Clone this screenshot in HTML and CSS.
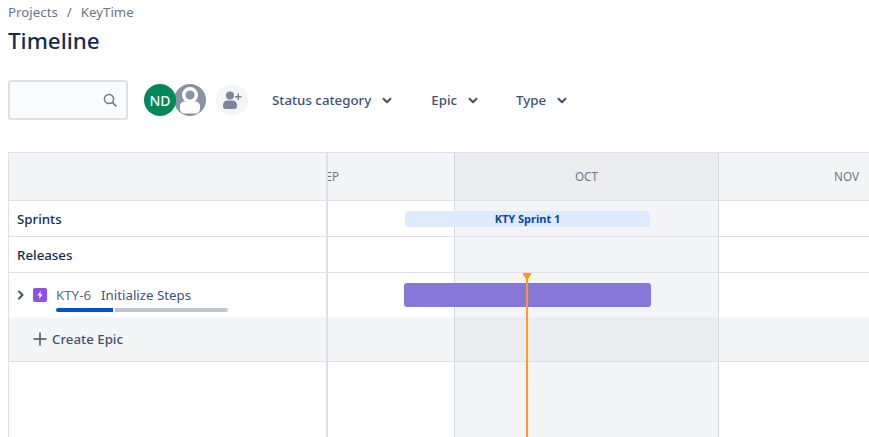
FILE: index.html
```html
<!DOCTYPE html>
<html lang="en">
<head>
<meta charset="utf-8">
<title>Timeline</title>
<link rel="stylesheet" href="styles.css">
</head>
<body>
<nav class="crumbs"><span>Projects</span><span class="sep">/</span><span>KeyTime</span></nav>
<h1 class="title">Timeline</h1>
<div class="toolbar">
  <div class="search">
    <svg class="search-icon" width="16" height="16" viewBox="0 0 16 16"><circle cx="7" cy="7" r="4.6" fill="none" stroke="#6b778c" stroke-width="1.5"/><path d="M10.4 10.4L14 14" stroke="#6b778c" stroke-width="1.6" stroke-linecap="round"/></svg>
  </div>
  <div class="avatars">
    <div class="avatar avatar-nd">ND</div>
    <div class="avatar avatar-user">
      <svg width="32" height="32" viewBox="0 0 32 32"><circle cx="16" cy="16" r="16" fill="#8993a4"/><circle cx="16" cy="11" r="6.3" fill="none" stroke="#fff" stroke-width="3.5"/><path d="M6 22c0-3 2-4.500 4.500-4.500h11c2.500 0 4.500 1.500 4.500 4.500v3c0 2.500-2 4.500-4.500 4.500h-11C8 29.500 6 27.500 6 25z" fill="#fff"/></svg>
    </div>
  </div>
  <div class="add-user">
    <svg width="24" height="24" viewBox="0 0 24 24" fill="#7a869a"><circle cx="10" cy="7.500" r="4"/><path d="M3 17c0-3 2-4.500 4.500-4.500h5c2.500 0 4.500 1.500 4.500 4.500v1.500c0 1.400-1.100 2.500-2.500 2.500h-9C4.100 21 3 19.900 3 18.500z"/><path d="M17.500 5.500h1.500v2.500h2.500v1.500H19v2.500h-1.500V9.500H15V8h2.500z"/></svg>
  </div>
  <div class="filter filter-status">Status category<svg class="chev" width="10" height="8" viewBox="0 0 10 8"><path d="M1.500 1.800L5 5.300l3.500-3.500" fill="none" stroke="#42526e" stroke-width="2" stroke-linecap="round" stroke-linejoin="round"/></svg></div>
  <div class="filter filter-epic">Epic<svg class="chev" width="10" height="8" viewBox="0 0 10 8"><path d="M1.500 1.800L5 5.300l3.500-3.500" fill="none" stroke="#42526e" stroke-width="2" stroke-linecap="round" stroke-linejoin="round"/></svg></div>
  <div class="filter">Type<svg class="chev" width="10" height="8" viewBox="0 0 10 8"><path d="M1.500 1.800L5 5.300l3.500-3.500" fill="none" stroke="#42526e" stroke-width="2" stroke-linecap="round" stroke-linejoin="round"/></svg></div>
</div>
<section class="timeline">
  <div class="side">
    <div class="side-row head"></div>
    <div class="side-row strong sprints">Sprints</div>
    <div class="side-row strong releases">Releases</div>
    <div class="side-row epic">
      <svg class="expand" width="8" height="10" viewBox="0 0 8 10"><path d="M2 1.500L5.500 5 2 8.500" fill="none" stroke="#42526e" stroke-width="2" stroke-linecap="round" stroke-linejoin="round"/></svg>
      <svg class="epic-icon" width="14" height="14" viewBox="0 0 14 14"><rect width="14" height="14" rx="2" fill="#904ee2"/><path d="M7.900 2.800L4.400 7.500h2.300L6 11.200l3.600-4.900H7.300z" fill="#fff"/></svg>
      <span class="key">KTY-6</span><span class="name">Initialize Steps</span>
      <div class="progress"><span class="done"></span><span class="todo"></span></div>
    </div>
    <div class="side-row create">
      <svg class="plus" width="14" height="14" viewBox="0 0 14 14"><path d="M7 1v12M1 7h12" stroke="#42526e" stroke-width="1.500" stroke-linecap="round"/></svg>Create Epic
    </div>
  </div>
  <div class="chart">
    <div class="row r-head"><div class="cell"><span class="month month-sep">SEP</span></div><div class="cell now"><span class="month">OCT</span></div><div class="cell"><span class="month">NOV</span></div></div>
    <div class="row r-sprint"><div class="cell"></div><div class="cell now"></div><div class="cell"></div><div class="sprint-bar">KTY Sprint 1</div></div>
    <div class="row r-release"><div class="cell"></div><div class="cell now"></div><div class="cell"></div></div>
    <div class="row r-epic"><div class="cell"></div><div class="cell now"></div><div class="cell"></div><div class="epic-bar"></div></div>
    <div class="row r-create"><div class="cell"></div><div class="cell now"></div><div class="cell"></div></div>
    <div class="row r-rest"><div class="cell"></div><div class="cell now"></div><div class="cell"></div></div>
    <div class="today"><svg class="today-cap" width="8" height="7" viewBox="0 0 8 7"><path d="M0 0h8v2L4 7 0 2z" fill="#ff991f"/></svg></div>
  </div>
</section>
</body>
</html>
```
FILE: styles.css
```css
* { box-sizing: border-box; }
html, body { height: 100%; }
body {
  margin: 0;
  height: 437px;
  overflow: hidden;
  background: #fff;
  color: #172b4d;
  font-family: "Noto Sans", "Open Sans", sans-serif;
  font-size: 13.3px;
  display: flex;
  flex-direction: column;
  padding-left: 8px;
}
.crumbs {
  height: 26px;
  display: flex;
  gap: 8px;
  padding-top: 3px;
  line-height: 19px;
  font-size: 13.3px;
  color: #6b778c;
}
.sep { padding: 0 1px; }
.title {
  margin: 0;
  height: 54px;
  font-size: 22.4px;
  line-height: 29px;
  font-weight: 500;
  color: #172b4d;
}
.toolbar {
  height: 40px;
  display: flex;
  align-items: center;
}
.search {
  width: 120px;
  height: 40px;
  border: 2px solid #dfe1e6;
  border-radius: 3px;
  background: #fafbfc;
  display: flex;
  align-items: center;
  justify-content: flex-end;
  padding-right: 8px;
  margin-right: 16px;
}
.avatars { display: flex; margin-right: 10px; }
.avatar { width: 32px; height: 32px; border-radius: 50%; }
.avatar svg { display: block; }
.avatar-nd {
  background: #00875a;
  color: #fff;
  font-size: 14px;
  font-weight: 500;
  display: flex;
  align-items: center;
  justify-content: center;
  position: relative;
  z-index: 1;
}
.avatar-user { margin-left: -2px; }
.add-user {
  width: 32px;
  height: 32px;
  border-radius: 50%;
  background: #f4f5f7;
  display: flex;
  align-items: center;
  justify-content: center;
  margin-right: 24px;
}
.filter {
  display: flex;
  align-items: center;
  gap: 11px;
  color: #42526e;
  font-size: 13.3px;
  font-weight: 500;
}
.chev { margin-top: 1px; }
.filter-status { margin-right: 39px; }
.filter-epic { margin-right: 38px; }
.timeline {
  margin-top: 32px;
  flex: 1;
  min-height: 0;
  display: flex;
  border-top: 1px solid #dfe1e6;
}
.side {
  width: 320px;
  flex: none;
  border-left: 1px solid #dfe1e6;
  border-right: 2px solid #dfe1e6;
  display: flex;
  flex-direction: column;
}
.side-row {
  border-bottom: 1px solid #dfe1e6;
  display: flex;
  align-items: center;
  padding-left: 8px;
}
.head { height: 48px; background: #f4f5f7; }
.strong { font-weight: 500; color: #172b4d; }
.sprints, .releases { height: 36px; }
.epic {
  height: 44px;
  border-bottom: 0;
  position: relative;
  padding-bottom: 1px;
  padding-left: 8px;
  color: #42526e;
}
.expand { margin-right: 8px; }
.epic-icon { margin-right: 9px; }
.key { color: #5e6c84; margin-right: 10px; }
.name { color: #42526e; }
.progress {
  position: absolute;
  left: 47px;
  top: 35px;
  width: 172px;
  height: 4px;
  display: flex;
  gap: 2px;
}
.done { width: 57px; background: #0052cc; border-radius: 2px 0 0 2px; }
.todo { flex: 1; background: #c1c7d0; border-radius: 0 2px 2px 0; }
.create {
  height: 45px;
  background: #f4f5f7;
  padding-left: 24px;
  color: #42526e;
  font-weight: 500;
  gap: 5px;
}
.chart {
  flex: 1;
  min-width: 0;
  display: flex;
  flex-direction: column;
  position: relative;
  overflow: hidden;
}
.row {
  display: grid;
  grid-template-columns: 126px 264px 256px;
  border-bottom: 1px solid #dfe1e6;
  position: relative;
}
.cell { display: flex; align-items: center; justify-content: center; overflow: hidden; }
.cell + .cell { border-left: 1px solid #d5d8e0; }
.r-head { height: 48px; background: #f4f5f7; }
.r-head .now { background: #ebecf0; }
.r-head .cell { padding-bottom: 2px; }
.r-sprint, .r-release { height: 36px; }
.r-epic { height: 44px; border-bottom: 0; }
.r-create { height: 45px; background: #f4f5f7; }
.r-create .now { background: #ebecf0; }
.r-rest { flex: 1; border-bottom: 0; }
.now { background: #f4f5f7; }
.month { color: #6b778c; font-size: 11.7px; }
.month-sep { margin-right: auto; margin-left: -9px; }
.sprint-bar {
  position: absolute;
  left: 77px;
  top: 10px;
  width: 245px;
  height: 16px;
  border-radius: 3px;
  background: #deebff;
  color: #0747a6;
  font-size: 11px;
  font-weight: 700;
  line-height: 16px;
  text-align: center;
}
.epic-bar {
  position: absolute;
  left: 76px;
  top: 10px;
  width: 247px;
  height: 24px;
  border-radius: 3px;
  background: #8777d9;
}
.today {
  position: absolute;
  left: 198px;
  top: 120px;
  bottom: 0;
  width: 2px;
  background: #ff991f;
}
.today-cap { position: absolute; left: -3px; top: 0; display: block; }
```
